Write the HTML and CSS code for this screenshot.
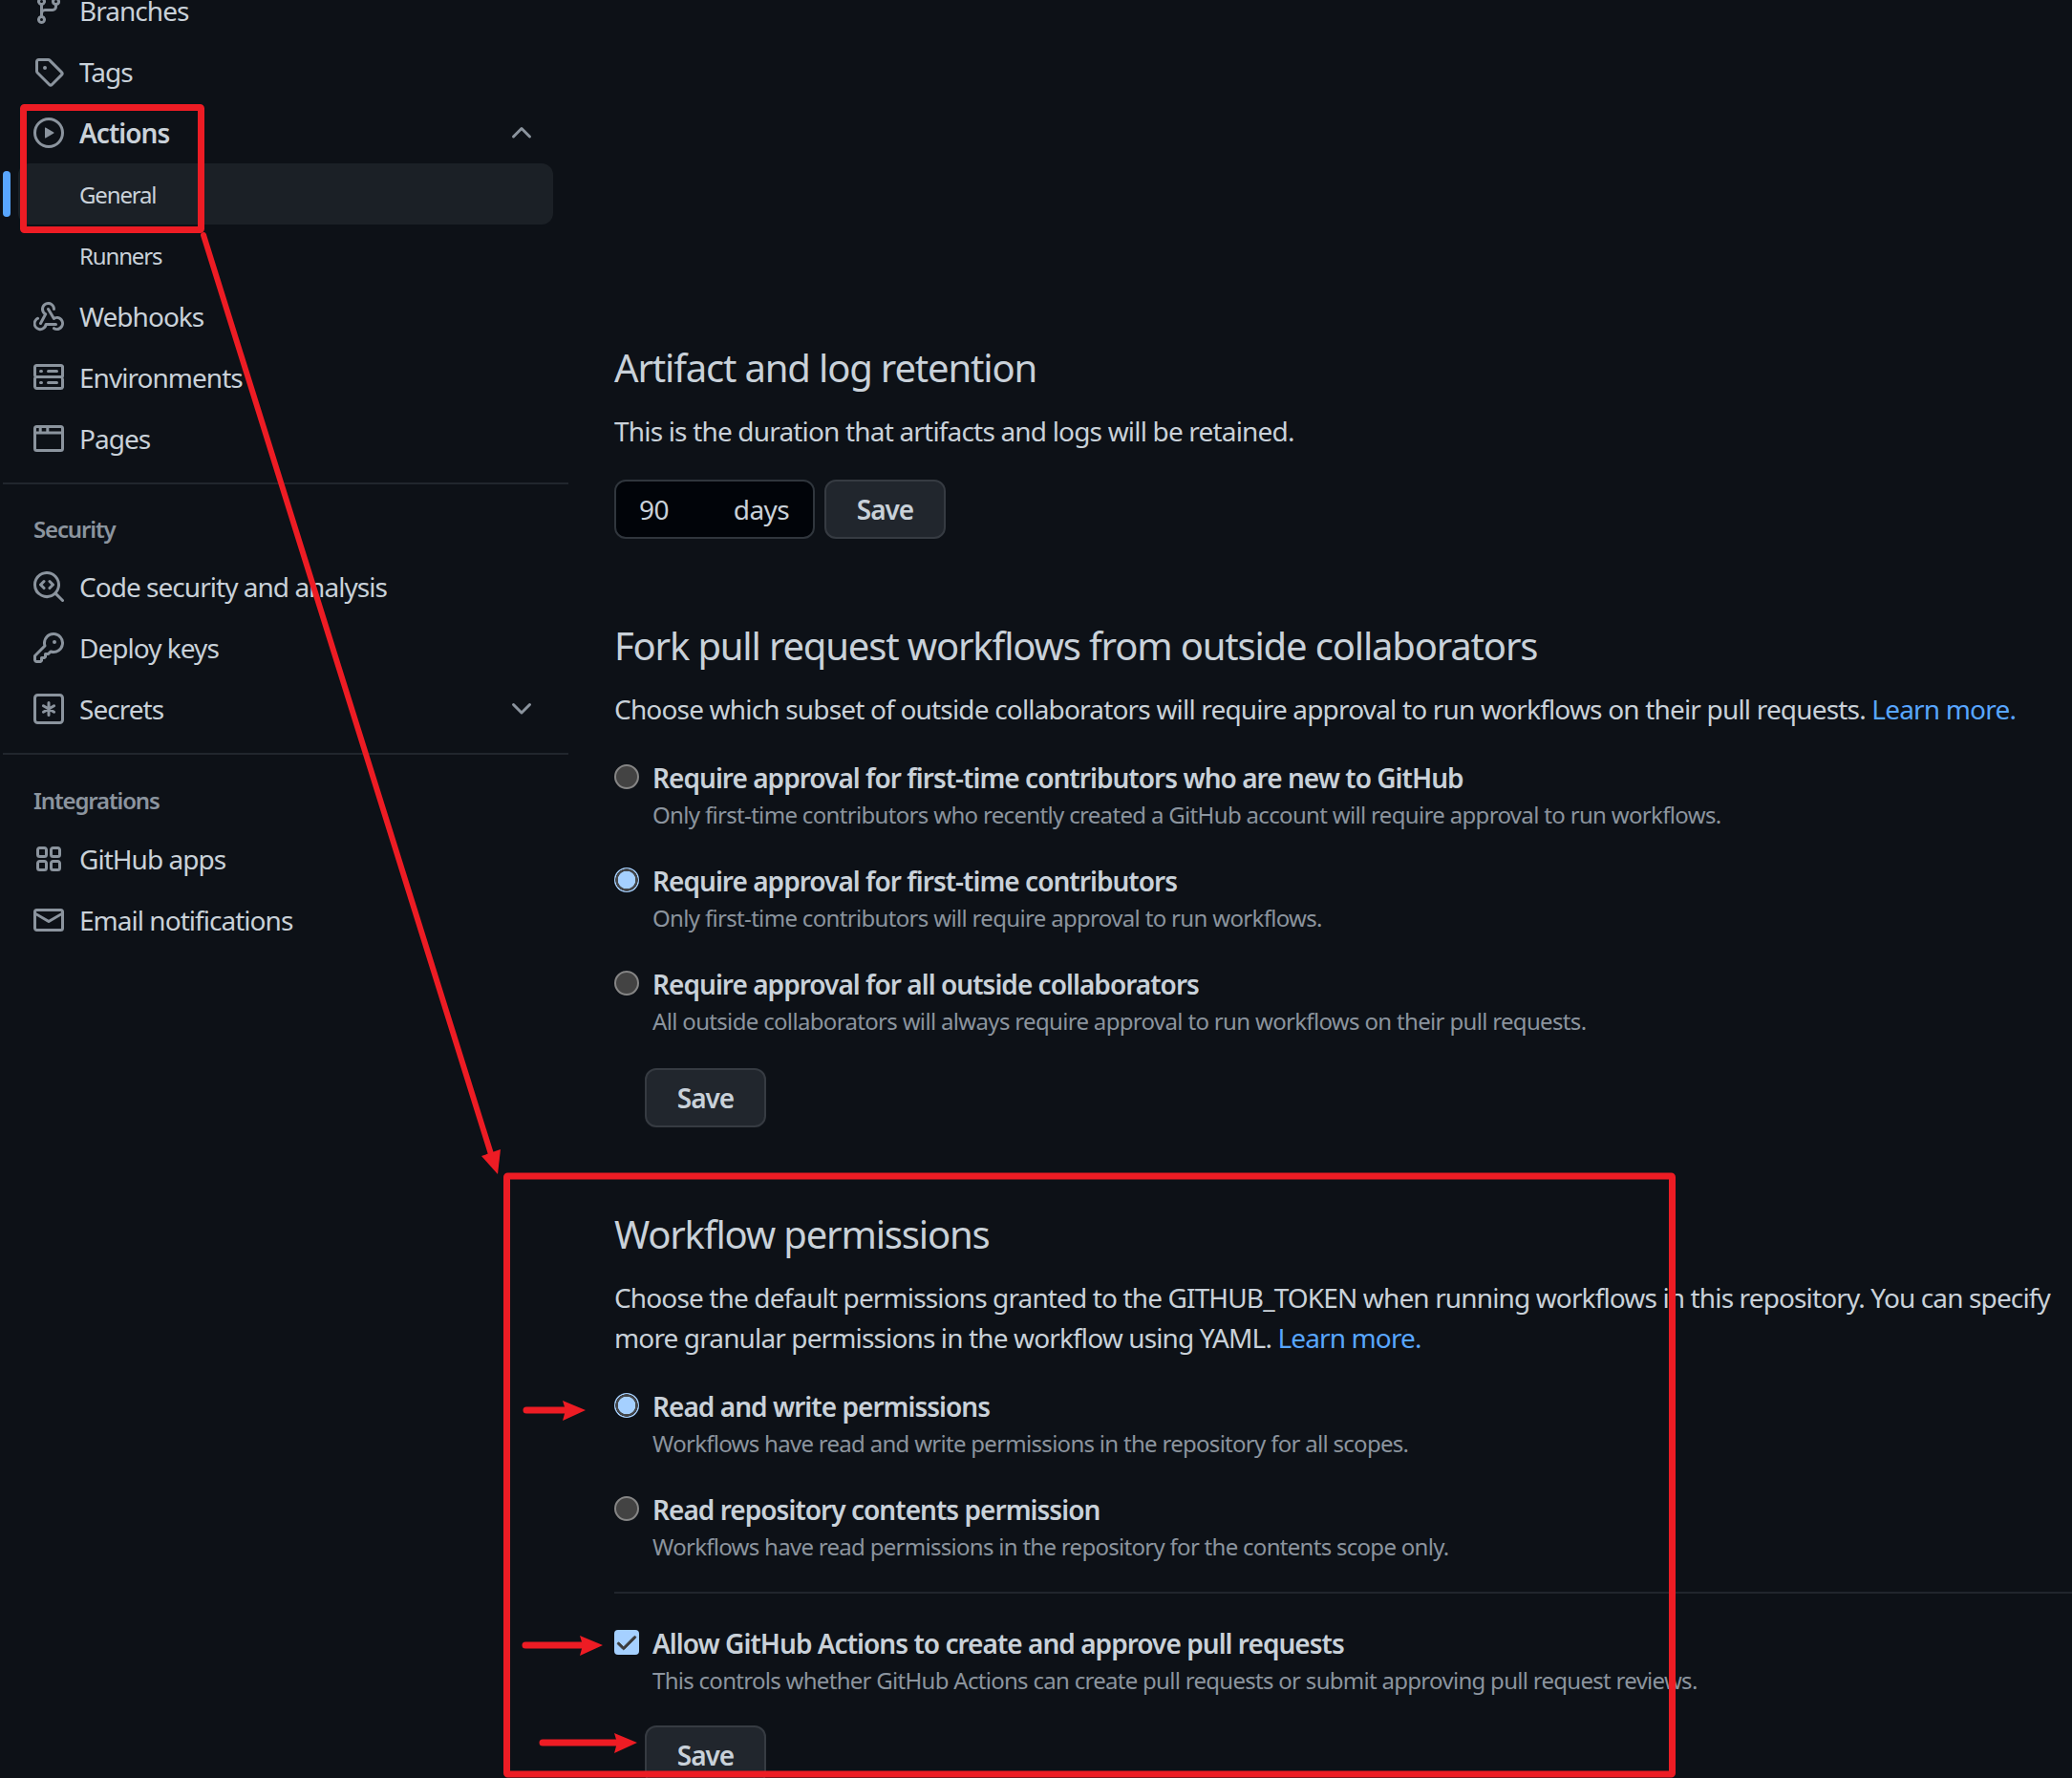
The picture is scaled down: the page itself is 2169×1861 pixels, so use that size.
FILE: index.html
```html
<!DOCTYPE html>
<html lang="en">
<head>
<meta charset="utf-8">
<title>Actions settings</title>
<link rel="stylesheet" href="styles.css">
</head>
<body>
<div class="page">
  <aside class="side">
    <nav class="group">
      <a class="item"><svg class="ico" viewBox="0 0 16 16"><path d="M11.75 2.5a.75.75 0 100 1.5.75.75 0 000-1.5zm-2.25.75a2.25 2.25 0 113 2.122V6A2.5 2.5 0 0110 8.5H6a1 1 0 00-1 1v1.128a2.251 2.251 0 11-1.5 0V5.372a2.25 2.25 0 111.5 0v1.836A2.492 2.492 0 016 7h4a1 1 0 001-1v-.628A2.25 2.25 0 019.5 3.25zM4.25 12a.75.75 0 100 1.5.75.75 0 000-1.5zM3.5 3.25a.75.75 0 111.5 0 .75.75 0 01-1.5 0z"/></svg>Branches</a>
      <a class="item"><svg class="ico" viewBox="0 0 16 16"><path d="M2.5 7.775V2.75a.25.25 0 01.25-.25h5.025a.25.25 0 01.177.073l6.25 6.25a.25.25 0 010 .354l-5.025 5.025a.25.25 0 01-.354 0l-6.25-6.25a.25.25 0 01-.073-.177zm-1.5 0V2.75C1 1.784 1.784 1 2.75 1h5.025c.464 0 .91.184 1.238.513l6.25 6.25a1.75 1.75 0 010 2.474l-5.026 5.026a1.75 1.75 0 01-2.474 0l-6.25-6.25A1.75 1.75 0 011 7.775zM6 5a1 1 0 100 2 1 1 0 000-2z"/></svg>Tags</a>
      <a class="item strong"><svg class="ico" viewBox="0 0 16 16"><path d="M1.5 8a6.5 6.5 0 1113 0 6.5 6.5 0 01-13 0zM8 0a8 8 0 100 16A8 8 0 008 0zM6.379 5.227A.25.25 0 006 5.442v5.117a.25.25 0 00.379.214l4.264-2.559a.25.25 0 000-.428L6.379 5.227z"/></svg>Actions<svg class="ico chev" viewBox="0 0 16 16"><path d="M3.22 10.53a.75.75 0 010-1.06l4.25-4.25a.75.75 0 011.06 0l4.25 4.25a.75.75 0 01-1.06 1.06L8 6.81 4.28 10.53a.75.75 0 01-1.06 0z"/></svg></a>
      <a class="item sub active">General</a>
      <a class="item sub">Runners</a>
      <a class="item"><svg class="ico" viewBox="0 0 16 16"><path d="M5.5 4.25a2.25 2.25 0 014.5 0 .75.75 0 001.5 0 3.75 3.75 0 10-6.14 2.889l-2.272 4.258a.75.75 0 001.324.706L7 7.25a.75.75 0 00-.309-1.015A2.25 2.25 0 015.5 4.25z"/><path d="M7.364 3.607a.75.75 0 011.03.257l2.608 4.349a3.75 3.75 0 11-.628 6.785.75.75 0 01.752-1.299 2.25 2.25 0 10-.033-3.88.75.75 0 01-1.03-.256L7.107 4.636a.75.75 0 01.257-1.03z"/><path d="M2.9 8.776A.75.75 0 012.625 9.8 2.25 2.25 0 105.75 12.25a.75.75 0 01.75-.75h5.25a.75.75 0 010 1.5H7.175A3.751 3.751 0 111.875 8.5a.75.75 0 011.025.276z"/></svg>Webhooks</a>
      <a class="item"><svg class="ico" viewBox="0 0 16 16"><path d="M1.75 1A1.75 1.75 0 000 2.75v4c0 .372.116.717.314 1a1.742 1.742 0 00-.314 1v4c0 .966.784 1.75 1.75 1.75h12.5A1.75 1.75 0 0016 13.25v-4c0-.372-.116-.717-.314-1 .198-.283.314-.628.314-1v-4A1.75 1.75 0 0014.25 1H1.75zm0 7.5a.25.25 0 00-.25.25v4c0 .138.112.25.25.25h12.5a.25.25 0 00.25-.25v-4a.25.25 0 00-.25-.25H1.75zM1.5 2.75a.25.25 0 01.25-.25h12.5a.25.25 0 01.25.25v4a.25.25 0 01-.25.25H1.75a.25.25 0 01-.25-.25v-4zm5.5 2A.75.75 0 017.75 4h4.5a.75.75 0 010 1.5h-4.5A.75.75 0 017 4.75zM7.75 10a.75.75 0 000 1.5h4.5a.75.75 0 000-1.5h-4.5zM3 4.75A.75.75 0 013.75 4h.5a.75.75 0 010 1.5h-.5A.75.75 0 013 4.75zM3.75 10a.75.75 0 000 1.5h.5a.75.75 0 000-1.5h-.5z"/></svg>Environments</a>
      <a class="item"><svg class="ico lined" viewBox="0 0 16 16"><rect x=".75" y="1.75" width="14.5" height="12.5" rx="1"/><path d="M.75 5h14.5M3.6 1.75V5M7.4 1.75V5"/></svg>Pages</a>
    </nav>
    <hr class="rule">
    <h3 class="label first">Security</h3>
    <nav class="group">
      <a class="item"><svg class="ico" viewBox="0 0 16 16"><path d="M7 1.5a5.5 5.5 0 100 11 5.5 5.5 0 000-11zM0 7a7 7 0 1112.45 4.39l3.33 3.33a.75.75 0 11-1.06 1.06l-3.33-3.33A7 7 0 010 7zm6.03-2.28a.75.75 0 010 1.06L4.81 7l1.22 1.22a.75.75 0 11-1.06 1.06L3.22 7.53a.75.75 0 010-1.06l1.75-1.75a.75.75 0 011.06 0zm1.94 0a.75.75 0 011.06 0l1.75 1.75a.75.75 0 010 1.06L9.03 9.28a.75.75 0 11-1.06-1.06L9.19 7 7.97 5.78a.75.75 0 010-1.06z"/></svg>Code security and analysis</a>
      <a class="item"><svg class="ico" viewBox="0 0 16 16"><path d="M6.5 5.5a4 4 0 112.731 3.795.75.75 0 00-.768.18L7.44 10.5H6.25a.75.75 0 00-.75.75v1.19l-.06.06H4.25a.75.75 0 00-.75.75v1.19l-.06.06H1.75a.25.25 0 01-.25-.25v-1.69l5.024-5.023a.75.75 0 00.181-.768A3.995 3.995 0 016.5 5.5zm4-5.5a5.5 5.5 0 00-5.348 6.788L.22 11.72a.75.75 0 00-.22.53v2C0 15.216.784 16 1.75 16h2a.75.75 0 00.53-.22l.5-.5a.75.75 0 00.22-.53V14h.75a.75.75 0 00.53-.22l.5-.5a.75.75 0 00.22-.53V12h.75a.75.75 0 00.53-.22l.932-.932A5.5 5.5 0 1010.5 0zm.5 6a1 1 0 100-2 1 1 0 000 2z"/></svg>Deploy keys</a>
      <a class="item"><svg class="ico lined" viewBox="0 0 16 16"><rect x=".75" y=".75" width="14.5" height="14.5" rx="1.5"/><path class="thick" d="M8 4.8v6.4M5.2 6.4l5.6 3.2M5.2 9.6l5.6-3.2"/></svg>Secrets<svg class="ico chev" viewBox="0 0 16 16"><path d="M12.78 5.22a.75.75 0 010 1.06l-4.25 4.25a.75.75 0 01-1.06 0L3.22 6.28a.75.75 0 011.06-1.06L8 8.94l3.72-3.72a.75.75 0 011.06 0z"/></svg></a>
    </nav>
    <hr class="rule">
    <h3 class="label">Integrations</h3>
    <nav class="group">
      <a class="item"><svg class="ico" viewBox="0 0 16 16"><path d="M1.5 3.25c0-.966.784-1.75 1.75-1.75h2.5c.966 0 1.75.784 1.75 1.75v2.5A1.75 1.75 0 015.75 7.5h-2.5A1.75 1.75 0 011.5 5.75v-2.5zM3.25 3a.25.25 0 00-.25.25v2.5c0 .138.112.25.25.25h2.5A.25.25 0 006 5.75v-2.5A.25.25 0 005.75 3h-2.5zM8.5 3.25c0-.966.784-1.75 1.75-1.75h2.5c.966 0 1.75.784 1.75 1.75v2.5a1.75 1.75 0 01-1.75 1.75h-2.5A1.75 1.75 0 018.5 5.75v-2.5zM10.25 3a.25.25 0 00-.25.25v2.5c0 .138.112.25.25.25h2.5a.25.25 0 00.25-.25v-2.5a.25.25 0 00-.25-.25h-2.5zM1.5 10.25c0-.966.784-1.75 1.75-1.75h2.5c.966 0 1.75.784 1.75 1.75v2.5a1.75 1.75 0 01-1.75 1.75h-2.5a1.75 1.75 0 01-1.75-1.75v-2.5zM3.25 10a.25.25 0 00-.25.25v2.5c0 .138.112.25.25.25h2.5a.25.25 0 00.25-.25v-2.5a.25.25 0 00-.25-.25h-2.5zM8.5 10.25c0-.966.784-1.75 1.75-1.75h2.5c.966 0 1.75.784 1.75 1.75v2.5a1.75 1.75 0 01-1.75 1.75h-2.5a1.75 1.75 0 01-1.75-1.75v-2.5zm1.75-.25a.25.25 0 00-.25.25v2.5c0 .138.112.25.25.25h2.5a.25.25 0 00.25-.25v-2.5a.25.25 0 00-.25-.25h-2.5z"/></svg>GitHub apps</a>
      <a class="item"><svg class="ico" viewBox="0 0 16 16"><path d="M1.75 2A1.75 1.75 0 000 3.75v.736a.75.75 0 000 .027v7.737C0 13.216.784 14 1.75 14h12.5A1.75 1.75 0 0016 12.25v-8.5A1.75 1.75 0 0014.25 2H1.75zM14.5 4.07v-.32a.25.25 0 00-.25-.25H1.75a.25.25 0 00-.25.25v.32L8 7.88l6.5-3.81zm-13 1.74v6.441c0 .138.112.25.25.25h12.5a.25.25 0 00.25-.25V5.809L8.38 9.397a.75.75 0 01-.76 0L1.5 5.809z"/></svg>Email notifications</a>
    </nav>
  </aside>
  <main class="main">
    <section class="block">
      <h2 class="title">Artifact and log retention</h2>
      <p class="desc">This is the duration that artifacts and logs will be retained.</p>
      <div class="inline">
        <div class="days"><span>90</span><span>days</span></div>
        <button class="btn">Save</button>
      </div>
    </section>
    <section class="block">
      <h2 class="title">Fork pull request workflows from outside collaborators</h2>
      <p class="desc">Choose which subset of outside collaborators will require approval to run workflows on their pull requests. <a class="link">Learn more.</a></p>
      <div class="options">
        <div class="opt"><span class="radio"></span><div><div class="opt-label">Require approval for first-time contributors who are new to GitHub</div><div class="opt-note">Only first-time contributors who recently created a GitHub account will require approval to run workflows.</div></div></div>
        <div class="opt"><span class="radio on"></span><div><div class="opt-label">Require approval for first-time contributors</div><div class="opt-note">Only first-time contributors will require approval to run workflows.</div></div></div>
        <div class="opt"><span class="radio"></span><div><div class="opt-label">Require approval for all outside collaborators</div><div class="opt-note">All outside collaborators will always require approval to run workflows on their pull requests.</div></div></div>
      </div>
      <button class="btn indented">Save</button>
    </section>
    <section class="block tight">
      <h2 class="title">Workflow permissions</h2>
      <p class="desc">Choose the default permissions granted to the GITHUB_TOKEN when running workflows in this repository. You can specify<br>more granular permissions in the workflow using YAML. <a class="link">Learn more.</a></p>
      <div class="options">
        <div class="opt"><span class="radio on"></span><div><div class="opt-label">Read and write permissions</div><div class="opt-note">Workflows have read and write permissions in the repository for all scopes.</div></div></div>
        <div class="opt"><span class="radio"></span><div><div class="opt-label">Read repository contents permission</div><div class="opt-note">Workflows have read permissions in the repository for the contents scope only.</div></div></div>
      </div>
      <hr class="rule inner">
      <div class="opt"><span class="check"><svg viewBox="0 0 16 16"><path d="M13.78 4.22a.75.75 0 010 1.06l-7.25 7.25a.75.75 0 01-1.06 0L2.22 9.28a.75.75 0 011.06-1.06L6 10.94l6.72-6.72a.75.75 0 011.06 0z"/></svg></span><div><div class="opt-label">Allow GitHub Actions to create and approve pull requests</div><div class="opt-note">This controls whether GitHub Actions can create pull requests or submit approving pull request reviews.</div></div></div>
      <button class="btn indented last">Save</button>
    </section>
  </main>
  <svg class="marks" viewBox="0 0 2169 1861">
    <rect x="24.5" y="112.5" width="186" height="128" rx="1"/>
    <rect x="530.5" y="1231" width="1220" height="626" rx="1"/>
    <path class="shaft" d="M213 246 L514 1208"/>
    <path class="head" d="M521 1229 L504 1210 L524 1203 Z"/>
    <path d="M551 1476 L595 1476"/>
    <path class="head" d="M613 1476 L589 1466 L592 1476 L589 1487 Z"/>
    <path d="M550 1722 L612 1722"/>
    <path class="head" d="M631 1722 L607 1712 L610 1722 L607 1733 Z"/>
    <path d="M568 1824 L648 1824"/>
    <path class="head" d="M667 1824 L643 1814 L646 1824 L643 1835 Z"/>
  </svg>
</div>
</body>
</html>
```
FILE: styles.css
```css
* { box-sizing: border-box; }
html, body { margin: 0; padding: 0; background: #0d1117; }
body { font-family: "Noto Sans", "Open Sans", sans-serif; color: #c9d1d9; }
.page { position: relative; display: flex; width: 2169px; height: 1861px; overflow: hidden; background: #0d1117; }
.side { flex: 0 0 592px; margin-left: 3px; margin-top: -21px; }
.group { display: flex; flex-direction: column; margin: 0 16px; }
.item { position: relative; display: flex; align-items: center; gap: 16px; height: 64px; padding-left: 16px; padding-right: 17px; font-size: 28px; letter-spacing: -.97px; color: #c9d1d9; border-radius: 12px; white-space: nowrap; }
.item.strong { font-weight: 600; }
.item.sub { padding-left: 64px; font-size: 24px; letter-spacing: -1.15px; }
.item.active { background: #1b2026; }
.item.active::before { content: ""; position: absolute; left: -16px; top: 8px; width: 8px; height: 48px; border-radius: 6px; background: #58a6ff; }
.ico { flex: none; width: 32px; height: 32px; fill: #8b949e; fill-rule: evenodd; }
.ico.lined { fill: none; stroke: #8b949e; stroke-width: 1.5; }
.ico .thick { stroke-width: 1.5; stroke-linecap: round; }
.chev { margin-left: auto; fill: #8b949e; stroke: none; }
.rule { height: 2px; margin: 14px 0 0; border: 0; background: #21262d; }
.label { margin: 0; padding: 30px 0 11px 32px; font-size: 24px; line-height: 36px; font-weight: 600; letter-spacing: -1.15px; color: #8b949e; }
.label.first { padding: 29px 0 10px 32px; }
.main { flex: 1; margin-left: 48px; padding-top: 355px; min-width: 0; }
.block { margin-bottom: 82px; }
.title { margin: 0 0 15px; font-size: 40px; line-height: 60px; font-weight: 400; letter-spacing: -1.17px; color: #c9d1d9; white-space: nowrap; }
.desc { margin: 0; font-size: 28px; line-height: 42px; letter-spacing: -.82px; white-space: nowrap; }
.tight .desc { letter-spacing: -.87px; }
.link { color: #58a6ff; }
.inline { display: flex; gap: 10px; margin-top: 30px; }
.days { display: flex; justify-content: space-between; align-items: center; width: 210px; height: 62px; padding: 0 25px 0 24px; background: #010409; border: 2px solid #30363d; border-radius: 12px; font-size: 28px; letter-spacing: -.6px; }
.btn { display: block; width: 127px; height: 62px; padding: 0; background: #21262d; border: 2px solid #363b42; border-radius: 12px; font-family: inherit; font-size: 28px; font-weight: 600; letter-spacing: -1px; color: #c9d1d9; }
.indented { margin: 30px 0 0 32px; }
.indented.last { margin-top: 28px; }
.options { display: flex; flex-direction: column; gap: 30px; margin-top: 31px; }
.opt { display: flex; gap: 14px; align-items: flex-start; white-space: nowrap; }
.opt-label { font-size: 28px; line-height: 40px; font-weight: 600; letter-spacing: -.97px; }
.opt-note { font-size: 24px; line-height: 38px; letter-spacing: -.67px; color: #8b949e; }
.tight .opt-note { letter-spacing: -.71px; }
.radio { flex: none; width: 26px; height: 26px; margin-top: 6px; border-radius: 50%; background: #434343; border: 2px solid #858585; }
.radio.on { border: 0; background: radial-gradient(circle, #a5d0ff 0 9px, #43464a 9.5px 11.5px, #a5d0ff 12px); }
.check { flex: none; display: flex; width: 26px; height: 26px; margin-top: 6px; border-radius: 4px; background: #a5d0ff; }
.check svg { width: 26px; height: 26px; fill: #3b3b3b; stroke: #3b3b3b; stroke-width: .5; }
.rule.inner { margin: 28px 0 32px; }
.marks { position: absolute; left: 0; top: 0; width: 2169px; height: 1861px; fill: none; stroke: #ed1c24; stroke-width: 7; stroke-linecap: round; pointer-events: none; }
.marks .shaft { stroke-width: 6; }
.marks .head { fill: #ed1c24; stroke: none; }
```
